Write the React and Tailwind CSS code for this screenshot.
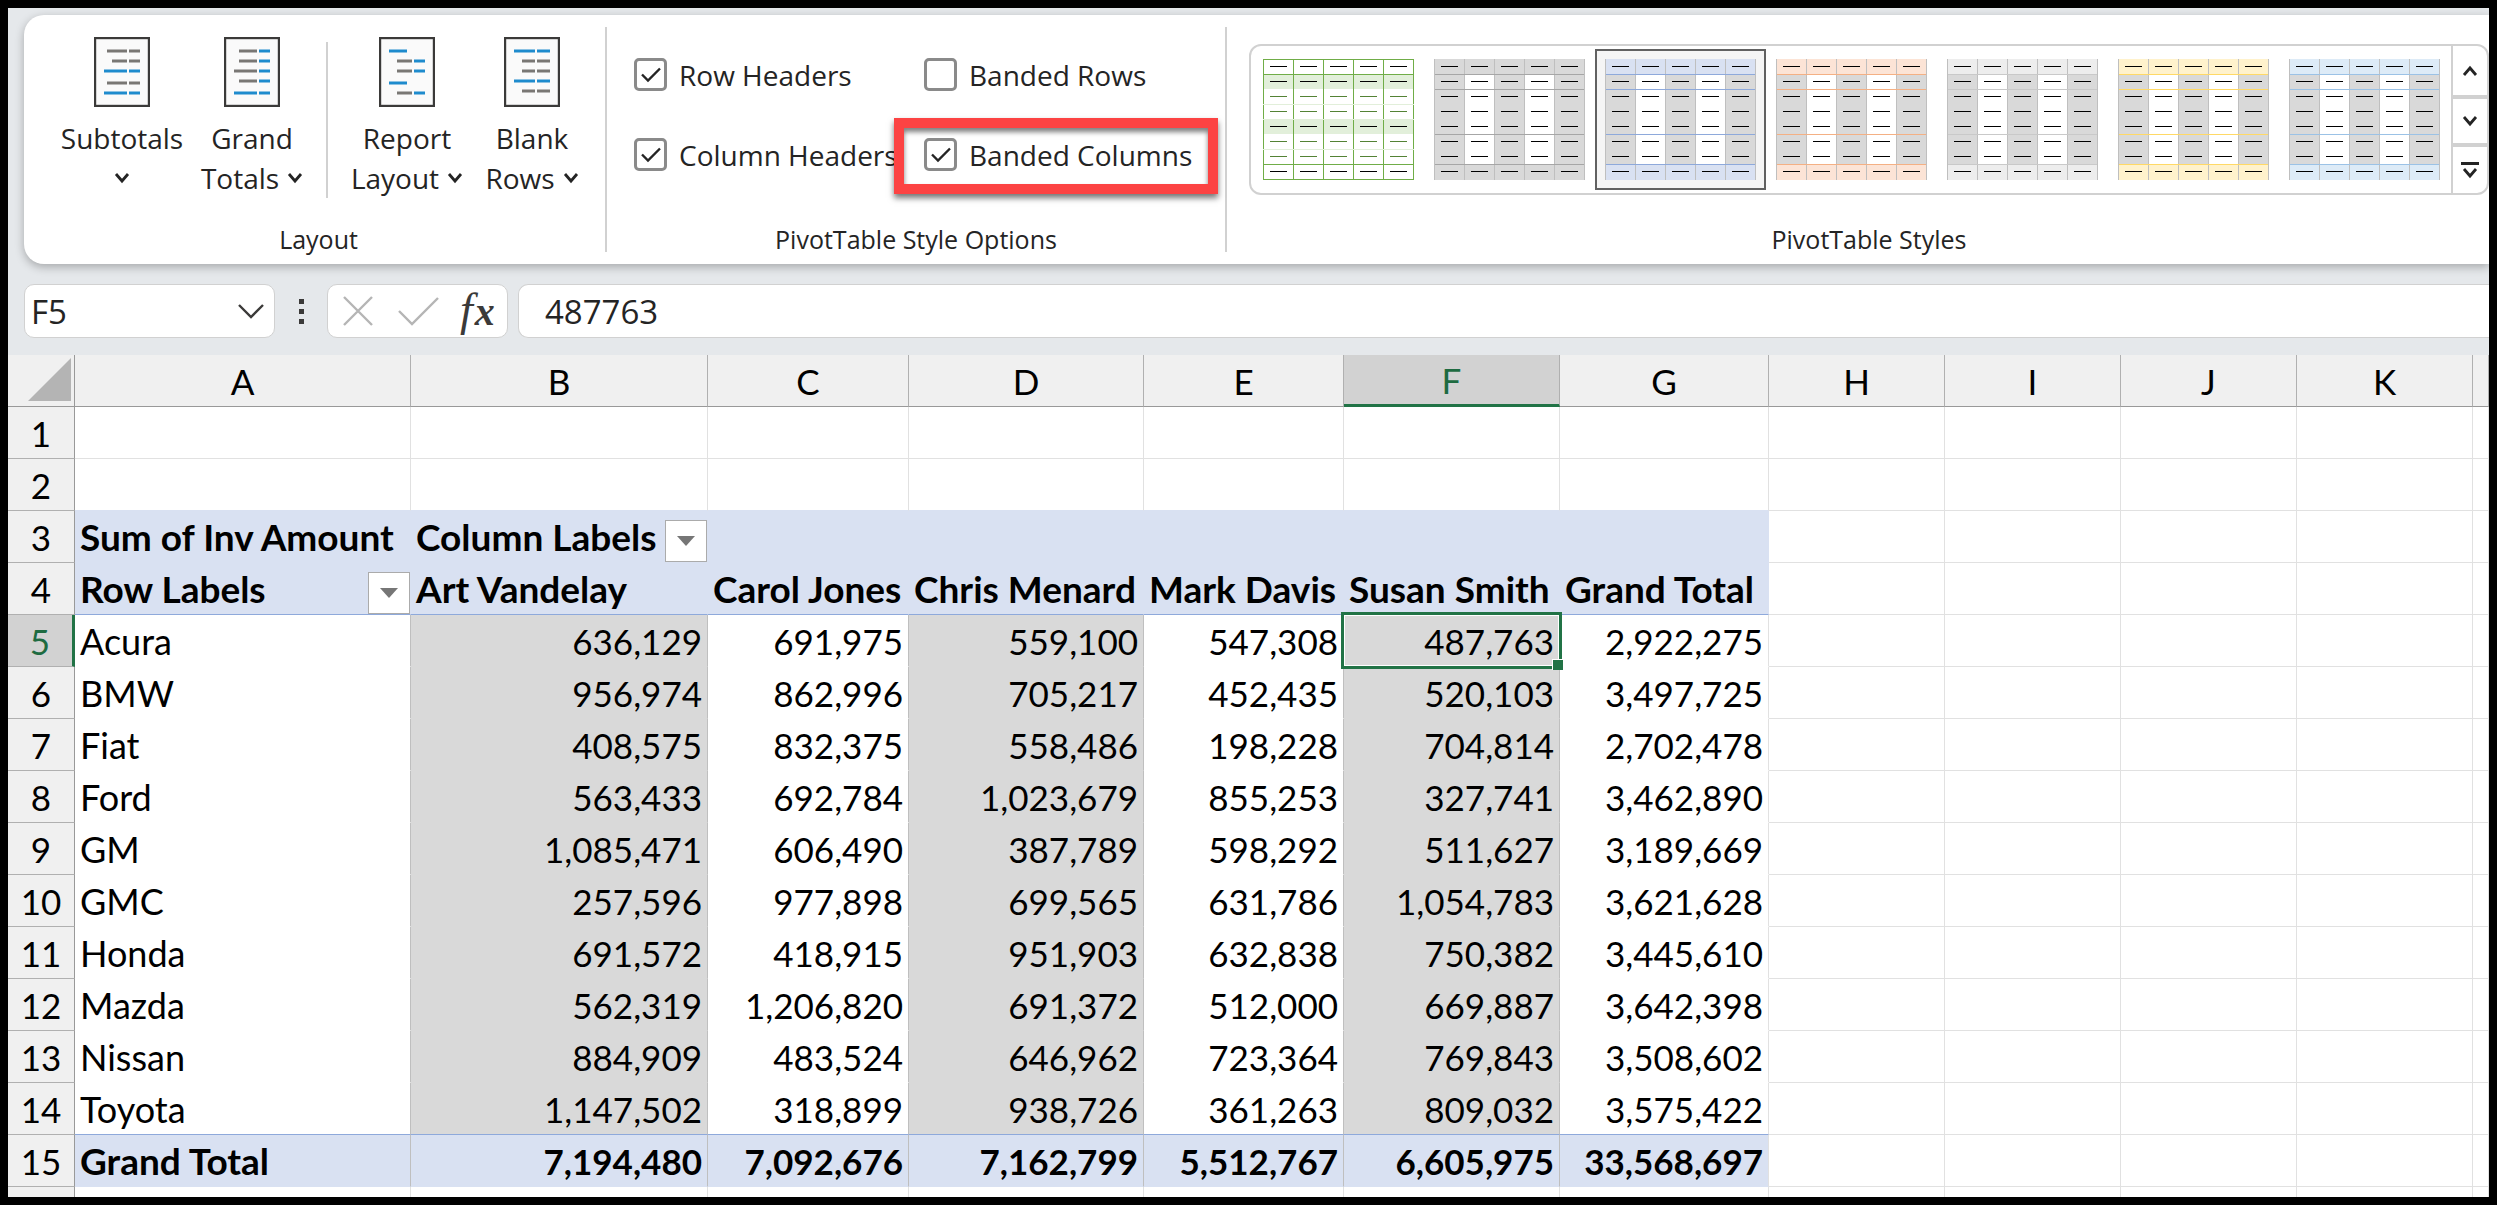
import React, { useState } from "react";

const GALLERY_STYLES = [
  { name: "Light Green", green: true },
  { name: "Light Gray", fill: "#d9d9d9", line: "#a6a6a6" },
  { name: "Light Blue", fill: "#d9e1f2", line: "#8ea9db" },
  { name: "Light Orange", fill: "#fce4d6", line: "#f4b084" },
  { name: "Light Silver", fill: "#ededed", line: "#c9c9c9" },
  { name: "Light Gold", fill: "#fff2cc", line: "#ffd966" },
  { name: "Light Sky", fill: "#ddebf7", line: "#9bc2e6" },
];

const COLUMNS = [
  { letter: "A", width: "w-[336px]" },
  { letter: "B", width: "w-[297px]" },
  { letter: "C", width: "w-[201px]" },
  { letter: "D", width: "w-[235px]" },
  { letter: "E", width: "w-[200px]" },
  { letter: "F", width: "w-[216px]" },
  { letter: "G", width: "w-[209px]" },
  { letter: "H", width: "w-[176px]" },
  { letter: "I", width: "w-[176px]" },
  { letter: "J", width: "w-[176px]" },
  { letter: "K", width: "w-[176px]" },
  { letter: "", width: "" },
];

const ROWS = [
  [],
  [],
  ["Sum of Inv Amount", "Column Labels", "", "", "", "", ""],
  ["Row Labels", "Art Vandelay", "Carol Jones", "Chris Menard", "Mark Davis", "Susan Smith", "Grand Total"],
  ["Acura", "636,129", "691,975", "559,100", "547,308", "487,763", "2,922,275"],
  ["BMW", "956,974", "862,996", "705,217", "452,435", "520,103", "3,497,725"],
  ["Fiat", "408,575", "832,375", "558,486", "198,228", "704,814", "2,702,478"],
  ["Ford", "563,433", "692,784", "1,023,679", "855,253", "327,741", "3,462,890"],
  ["GM", "1,085,471", "606,490", "387,789", "598,292", "511,627", "3,189,669"],
  ["GMC", "257,596", "977,898", "699,565", "631,786", "1,054,783", "3,621,628"],
  ["Honda", "691,572", "418,915", "951,903", "632,838", "750,382", "3,445,610"],
  ["Mazda", "562,319", "1,206,820", "691,372", "512,000", "669,887", "3,642,398"],
  ["Nissan", "884,909", "483,524", "646,962", "723,364", "769,843", "3,508,602"],
  ["Toyota", "1,147,502", "318,899", "938,726", "361,263", "809,032", "3,575,422"],
  ["Grand Total", "7,194,480", "7,092,676", "7,162,799", "5,512,767", "6,605,975", "33,568,697"],
  [],
];

// [x1, x2, y, blue?] for every dash on the page icon
const PAGE_ICONS = {
  subtotals: [
    [13, 33, 14], [35, 46, 14], [18, 33, 24], [35, 46, 24],
    [10, 33, 34, true], [35, 46, 34, true],
    [13, 33, 46], [35, 46, 46], [10, 33, 56, true], [35, 46, 56, true],
  ],
  grand: [
    [15, 33, 14], [35, 46, 14, true], [15, 33, 24], [35, 46, 24, true],
    [10, 33, 34], [35, 46, 34, true], [15, 33, 44], [35, 46, 44, true],
    [10, 33, 56, true], [35, 46, 56, true],
  ],
  report: [
    [10, 28, 14, true], [18, 33, 24], [35, 46, 24, true],
    [18, 33, 34], [35, 46, 34, true],
    [10, 28, 46, true], [18, 33, 56], [35, 46, 56, true],
  ],
  blank: [
    [10, 31, 14, true], [33, 46, 14, true], [18, 31, 24], [33, 46, 24],
    [18, 31, 34], [33, 46, 34], [10, 31, 44, true], [33, 46, 44, true],
    [18, 31, 54], [33, 46, 54],
  ],
};

const PageIcon = ({ kind }) => (
  <svg width="56" height="70" viewBox="0 0 56 70" aria-hidden="true">
    <rect x="1" y="1" width="54" height="68" fill="#fafafa" stroke="#3b3a39" strokeWidth="2.4" />
    {PAGE_ICONS[kind].map(([x1, x2, y, blue]) => (
      <path key={`${x1}-${y}`} d={`M${x1} ${y}H${x2}`} stroke={blue ? "#1e8bcd" : "#797774"} strokeWidth="3" />
    ))}
  </svg>
);

const Chevron = ({ up = false }) => (
  <svg width="16" height="12" viewBox="0 0 16 12" fill="none" stroke="#242424" strokeWidth="2.8" aria-hidden="true">
    <path d={up ? "M2 10L8 3L14 10" : "M2 2L8 9L14 2"} />
  </svg>
);

const LayoutButton = ({ icon, first, second, width }) => (
  <button type="button" className={`${width} flex flex-col items-center gap-[11px] text-[28px] leading-10`}>
    <PageIcon kind={icon} />
    <span className="flex flex-col items-center">
      <span>{first}</span>
      <span className="flex h-10 items-center gap-2">
        {second && <span>{second}</span>}
        <Chevron />
      </span>
    </span>
  </button>
);

const CheckOption = ({ id, label, initial, children }) => {
  const [checked, setChecked] = useState(initial);

  return (
    <div className="relative flex h-20 items-center gap-3">
      <span className="grid">
        <input
          id={id}
          type="checkbox"
          checked={checked}
          onChange={(event) => setChecked(event.target.checked)}
          className="h-[33px] w-[33px] appearance-none rounded-[5px] border-3 border-[#8a8a8a] bg-white [grid-area:1/1]"
        />
        {checked && (
          <svg
            viewBox="0 0 33 33"
            className="pointer-events-none h-[33px] w-[33px] [grid-area:1/1]"
            fill="none"
            stroke="#242424"
            strokeWidth="2.4"
            aria-hidden="true"
          >
            <path d="M8 16.5L14 22.5L26 10.5" />
          </svg>
        )}
      </span>
      <label htmlFor={id} className="whitespace-nowrap pt-0.5 text-[28px] leading-10">
        {label}
      </label>
      {children}
    </div>
  );
};

const StyleThumb = ({ item }) => {
  const cols = [0, 1, 2, 3, 4];
  const rows = [0, 1, 2, 3, 4, 5, 6, 7];
  const isEdge = (row) => row === 0 || row === 7;

  const cellFill = (row, col) => {
    if (item.green) return row === 1 || row === 4 ? "#e2efda" : "#ffffff";
    if (isEdge(row)) return item.fill;
    return col % 2 === 0 ? "#d9d9d9" : "#ffffff";
  };
  const dashColor = (row) => (item.green && [2, 3, 5, 6].includes(row) ? "#548235" : "#000000");

  return (
    <svg width="151" height="121" viewBox="0 0 151 121" shapeRendering="crispEdges" aria-hidden="true">
      {rows.map((row) =>
        cols.map((col) => (
          <rect key={`${row}-${col}`} x={col * 30} y={row * 15} width="31" height={row === 7 ? 16 : 15} fill={cellFill(row, col)} />
        ))
      )}
      {[0, 1, 2, 3, 4, 5].map((col) => (
        <rect key={col} x={col * 30} y="0" width="1" height="121" fill={item.green ? "#70ad47" : "#bfbfbf"} />
      ))}
      {item.green
        ? [0, 15, 45, 60, 90, 105, 120].map((y) => (
            <rect key={y} x="0" y={y} width="151" height="1" fill={[45, 60, 90].includes(y) ? "#e2efda" : "#70ad47"} />
          ))
        : [15, 30, 75, 105].map((y) => <rect key={y} x="1" y={y} width="149" height="1" fill={item.line} />)}
      {rows.map((row) =>
        cols.map((col) => (
          <rect key={`d${row}-${col}`} x={col * 30 + 7} y={row * 15 + 7} width="17" height="1" fill={dashColor(row)} />
        ))
      )}
    </svg>
  );
};

const GroupLabel = ({ children }) => (
  <div className="mt-auto pb-[7px] text-center text-[25px] leading-9">{children}</div>
);

const Ribbon = () => {
  const [selected, setSelected] = useState(2);

  return (
    <section className="ml-4 mt-[7px] flex h-[249px] rounded-l-[20px] bg-white shadow-[0_3px_10px_rgba(0,0,0,0.28)]">
      <div className="flex w-[581px] shrink-0 flex-col pl-2">
        <div className="flex pl-5 pt-[22px]">
          <LayoutButton icon="subtotals" first="Subtotals" width="w-[140px]" />
          <LayoutButton icon="grand" first="Grand" second="Totals" width="w-[120px]" />
          <div className="ml-3.5 mr-[15px] mt-[5px] h-[156px] w-0.5 bg-[#d1d1d1]" />
          <LayoutButton icon="report" first="Report" second="Layout" width="w-[128px]" />
          <LayoutButton icon="blank" first="Blank" second="Rows" width="w-[122px]" />
        </div>
        <GroupLabel>Layout</GroupLabel>
      </div>
      <div className="my-3 w-0.5 shrink-0 bg-[#d1d1d1]" />
      <div className="flex w-[618px] shrink-0 flex-col">
        <div className="grid grid-cols-[290px_1fr] pl-[27px] pt-[19px]">
          <CheckOption id="row-headers" label="Row Headers" initial={true} />
          <CheckOption id="banded-rows" label="Banded Rows" initial={false} />
          <CheckOption id="column-headers" label="Column Headers" initial={true} />
          <CheckOption id="banded-columns" label="Banded Columns" initial={true}>
            <div className="pointer-events-none absolute -left-[30px] bottom-0 right-[7px] top-1 border-10 border-[#fc4343] shadow-[0_4px_6px_rgba(0,0,0,0.55),inset_0_4px_5px_rgba(0,0,0,0.5)]" />
          </CheckOption>
        </div>
        <GroupLabel>PivotTable Style Options</GroupLabel>
      </div>
      <div className="my-3 w-0.5 shrink-0 bg-[#d1d1d1]" />
      <div className="flex min-w-0 flex-1 flex-col pl-[22px]">
        <div className="mt-[29px] flex h-[151px] rounded-xl border-2 border-[#d1d1d1]">
          <div className="flex min-w-0 flex-1 items-center overflow-hidden pl-0.5">
            {GALLERY_STYLES.map((item, index) => (
              <button
                key={item.name}
                type="button"
                aria-label={item.name}
                aria-pressed={selected === index}
                onClick={() => setSelected(index)}
                className={`flex h-[141px] w-[171px] shrink-0 items-center justify-center border-2 ${
                  selected === index ? "border-[#616161] bg-[#f5f5f5]" : "border-transparent"
                }`}
              >
                <StyleThumb item={item} />
              </button>
            ))}
          </div>
          <div className="flex w-9 shrink-0 flex-col divide-y-4 divide-[#d1d1d1] border-l-2 border-[#d1d1d1]">
            <button type="button" aria-label="Previous styles" className="flex h-[53px] items-center justify-center">
              <Chevron up />
            </button>
            <button type="button" aria-label="Next styles" className="flex h-12 items-center justify-center">
              <Chevron />
            </button>
            <button type="button" aria-label="More styles" className="flex flex-1 flex-col items-center justify-center gap-0.5">
              <span className="h-[3px] w-[18px] bg-[#242424]" />
              <Chevron />
            </button>
          </div>
        </div>
        <GroupLabel>PivotTable Styles</GroupLabel>
      </div>
    </section>
  );
};

const FormulaBar = () => (
  <section className="my-5 mb-[17px] ml-4 flex h-[54px] text-[33px]">
    <div className="flex w-[251px] items-center rounded-[10px] border border-[#d1d1d1] bg-white pl-1.5 pr-2.5">
      <input aria-label="Name box" defaultValue="F5" className="min-w-0 flex-1 bg-transparent pt-0.5 outline-none" />
      <button type="button" aria-label="Open name list">
        <svg width="26" height="16" viewBox="0 0 26 16" fill="none" stroke="#3b3a39" strokeWidth="2.4" aria-hidden="true">
          <path d="M1 2L13 14L25 2" />
        </svg>
      </button>
    </div>
    <div className="flex w-[52px] flex-col items-center justify-center gap-[5px]">
      <span className="h-[5px] w-[5px] bg-[#3b3a39]" />
      <span className="h-[5px] w-[5px] bg-[#3b3a39]" />
      <span className="h-[5px] w-[5px] bg-[#3b3a39]" />
    </div>
    <div className="flex w-[181px] items-center rounded-[10px] border border-[#d1d1d1] bg-white pl-3.5">
      <button type="button" aria-label="Cancel">
        <svg width="32" height="32" viewBox="0 0 32 32" fill="none" stroke="#b5b5b5" strokeWidth="2.4" aria-hidden="true">
          <path d="M2 2L30 30M30 2L2 30" />
        </svg>
      </button>
      <button type="button" aria-label="Enter" className="ml-6">
        <svg width="42" height="30" viewBox="0 0 42 30" fill="none" stroke="#b5b5b5" strokeWidth="2.4" aria-hidden="true">
          <path d="M1 15L14 28L40 2" />
        </svg>
      </button>
      <button
        type="button"
        aria-label="Insert function"
        className="ml-5 flex items-baseline gap-0.5 font-['Liberation_Serif',serif] leading-[48px] text-[#3b3a39] italic"
      >
        <span className="text-[46px]">f</span>
        <span className="text-[40px] font-bold">x</span>
      </button>
    </div>
    <input
      aria-label="Formula bar"
      defaultValue="487763"
      className="ml-2.5 min-w-0 flex-1 rounded-l-[10px] border border-r-0 border-[#d1d1d1] bg-white pl-[26px] pt-0.5 outline-none"
    />
  </section>
);

const FilterButton = ({ label }) => (
  <button
    type="button"
    aria-label={label}
    className="flex h-[42px] w-[42px] shrink-0 items-center justify-center border border-[#ababab] bg-white"
  >
    <svg width="18" height="10" viewBox="0 0 18 10" aria-hidden="true">
      <path d="M0 0H18L9 10Z" fill="#767676" />
    </svg>
  </button>
);

const cellClass = (rowNumber, col) => {
  const inPivot = col < 7 && rowNumber >= 3 && rowNumber <= 15;
  if (!inPivot) {
    const abovePivot = rowNumber === 2 && col < 7;
    return `border-r border-b border-r-[#e1e1e1] ${abovePivot ? "border-b-[#d9e1f2]" : "border-b-[#e1e1e1]"}`;
  }
  if (rowNumber === 3) return "border-r border-b border-[#d9e1f2] bg-[#d9e1f2] text-[37px] font-bold";
  if (rowNumber === 4) {
    return "border-r border-b border-r-[#d9e1f2] border-b-[#8ea9db] bg-[#d9e1f2] text-[37px] font-bold";
  }

  const rightLine = col === 6 ? "border-r-[#e1e1e1]" : "border-r-[#bfbfbf]";
  const align = col === 0 ? "text-left" : "text-right";
  if (rowNumber === 15) {
    const size = col === 0 ? "text-[37px]" : "text-[35px]";
    return `border-r border-b border-b-[#d9e1f2] bg-[#d9e1f2] font-bold ${size} ${rightLine} ${align}`;
  }

  const banded = col === 1 || col === 3 || col === 5;
  const size = col === 0 ? "text-[36px]" : "text-[35px]";
  const bottom = rowNumber === 14 ? "border-b-[#8ea9db]" : banded ? "border-b-[#d9d9d9]" : "border-b-white";
  return `border-r border-b ${bottom} ${rightLine} ${align} ${size} ${banded ? "bg-[#d9d9d9]" : "bg-white"}`;
};

const Cell = ({ rowNumber, col, value }) => {
  const isActive = rowNumber === 5 && col === 5;
  const hasFilter = (rowNumber === 3 && col === 1) || (rowNumber === 4 && col === 0);

  return (
    <td className={`relative h-[52px] whitespace-nowrap py-0 leading-[50px] ${hasFilter ? "pl-[5px] pr-0" : "px-[5px]"} ${cellClass(rowNumber, col)}`}>
      {hasFilter ? (
        <div className="flex h-[51px] items-end justify-between">
          <span>{value}</span>
          <FilterButton label={`Filter ${value}`} />
        </div>
      ) : (
        value
      )}
      {isActive && (
        <div className="pointer-events-none absolute -bottom-[3px] -left-[3px] -right-[3px] -top-[3px] z-10 border-3 border-[#217346] shadow-[inset_0_0_0_1px_#ffffff]">
          <span className="absolute -bottom-1 -right-1 h-[11px] w-[11px] border-t border-l border-white bg-[#217346]" />
        </div>
      )}
    </td>
  );
};

const Sheet = () => (
  <div className="min-h-0 flex-1 overflow-hidden bg-white">
    <table className="w-full table-fixed border-separate border-spacing-0 font-[Lato,sans-serif] text-[35px] text-black">
      <colgroup>
        <col className="w-[67px]" />
        {COLUMNS.map((column, index) => (
          <col key={index} className={column.width} />
        ))}
      </colgroup>
      <thead>
        <tr>
          <th className="h-[52px] border-r border-b border-[#999999] bg-[#f0f0f0] p-0 pb-0.5 pr-[3px]">
            <svg width="43" height="43" viewBox="0 0 43 43" className="ml-auto" aria-hidden="true">
              <path d="M43 0V43H0Z" fill="#b4b4b4" />
            </svg>
          </th>
          {COLUMNS.map(({ letter }, index) => (
            <th
              key={index}
              scope="col"
              className={`h-[52px] border-r p-0 text-center leading-[48px] font-normal ${
                letter === "F"
                  ? "border-b-3 border-r-[#b0b0b0] border-b-[#217346] bg-[#d2d2d2] text-[#1e6b41]"
                  : "border-b border-r-[#b0b0b0] border-b-[#999999] bg-[#f0f0f0]"
              }`}
            >
              {letter}
            </th>
          ))}
        </tr>
      </thead>
      <tbody>
        {ROWS.map((row, index) => {
          const rowNumber = index + 1;
          return (
            <tr key={rowNumber}>
              <th
                scope="row"
                className={`h-[52px] border-b border-b-[#b0b0b0] p-0 text-center leading-[50px] font-normal ${
                  rowNumber === 5
                    ? "border-r-3 border-r-[#217346] bg-[#d2d2d2] text-[#1e6b41]"
                    : "border-r border-r-[#999999] bg-[#f0f0f0]"
                }`}
              >
                {rowNumber <= 15 ? rowNumber : ""}
              </th>
              {COLUMNS.map((column, col) => (
                <Cell key={col} rowNumber={rowNumber} col={col} value={row[col]} />
              ))}
            </tr>
          );
        })}
      </tbody>
    </table>
  </div>
);

const App = () => {
  return (
    <main className="flex h-screen flex-col overflow-hidden border-8 border-black bg-[#e5e8eb] font-['Open_Sans',sans-serif] text-[#242424]">
      <Ribbon />
      <FormulaBar />
      <Sheet />
    </main>
  );
};

export default App;
